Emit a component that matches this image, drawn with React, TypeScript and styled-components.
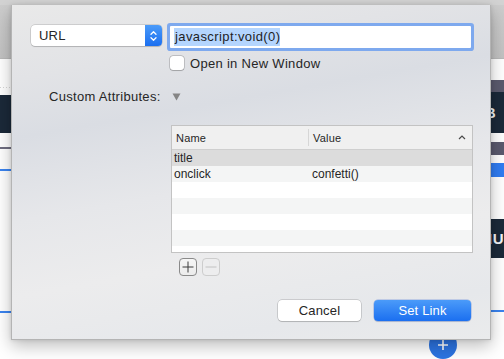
import React from "react";
import styled, { createGlobalStyle } from "styled-components";

const Global = createGlobalStyle`
  html, body { margin: 0; padding: 0; }
  body {
    width: 504px; height: 359px; overflow: hidden; background: #fff;
    font-family: "Liberation Sans", Arial, sans-serif;
    -webkit-font-smoothing: antialiased;
  }
`;

const Page = styled.div`
  position: relative;
  width: 504px;
  height: 359px;
  overflow: hidden;
  display: flex;
  flex-direction: column;
  background: #fff;
`;

const TitleStrip = styled.div`
  height: 5px;
  background: #d3d3d3;
  flex: none;
`;

const Toolbar = styled.div`
  height: 54px;
  flex: none;
  background: linear-gradient(180deg, #cdcdcd 0%, #c2c2c2 100%);
  border-bottom: 1px solid #b9b9b9;
  box-sizing: border-box;
`;

const Content = styled.div`
  flex: 1;
  display: flex;
  position: relative;
`;

const Gutter = styled.div<{ $w: number }>`
  width: ${(p) => p.$w}px;
  flex: none;
  display: flex;
  flex-direction: column;
`;

const Middle = styled.div`
  flex: 1;
  position: relative;
`;

const Band = styled.div<{ $h: number; $bg: string }>`
  height: ${(p) => p.$h}px;
  flex: none;
  background: ${(p) => p.$bg};
  display: flex;
  align-items: center;
  justify-content: flex-end;
`;

const BandText = styled.span<{ $right: number; $size: number }>`
  margin-right: ${(p) => p.$right}px;
  font-family: "Liberation Sans", Arial, sans-serif;
  font-weight: 700;
  font-size: ${(p) => p.$size}px;
  color: #f2f4f8;
  white-space: nowrap;
  letter-spacing: 0.5px;
`;

const Fab = styled.div`
  position: absolute;
  left: 418px;
  top: 272px;
  width: 28px;
  height: 28px;
  border-radius: 50%;
  background: #2c74e2;
  display: flex;
  align-items: center;
  justify-content: center;
`;

const Sheet = styled.div`
  position: absolute;
  left: 11px;
  top: 5px;
  width: 480px;
  height: 335px;
  box-sizing: border-box;
  border: 1px solid #b4b4b4;
  border-top: none;
  background: linear-gradient(170deg, #e9e9e9 0%, #e2e3e6 18%, #dadde3 32%, #e6e7ea 52%, #ececed 70%, #e6e8eb 88%, #eaebec 100%);
  box-shadow: 0 6px 16px rgba(0, 0, 0, 0.26), 0 0 4px rgba(0, 0, 0, 0.12);
  padding: 20px 19px 0 19px;
  display: flex;
  flex-direction: column;
  color: #262626;
  font-size: 13px;
`;

const Row = styled.div<{ $mt: number; $h: number; $pl?: number; $top?: boolean }>`
  display: flex;
  align-items: ${(p) => (p.$top ? "flex-start" : "center")};
  margin-top: ${(p) => p.$mt}px;
  height: ${(p) => p.$h}px;
  padding-left: ${(p) => p.$pl ?? 0}px;
  flex: none;
`;

const Popup = styled.div`
  width: 131px;
  height: 21px;
  box-sizing: border-box;
  display: flex;
  background: #fff;
  border-radius: 4px;
  box-shadow: 0 0 0 0.5px rgba(0, 0, 0, 0.22), 0 1px 1px rgba(0, 0, 0, 0.12);
  overflow: hidden;
`;

const PopupLabel = styled.div`
  flex: 1;
  padding-left: 8px;
  display: flex;
  align-items: center;
  font-size: 13px;
  letter-spacing: 0.2px;
  color: #262626;
`;

const Stepper = styled.div`
  width: 17px;
  background: linear-gradient(180deg, #4b9bf9 0%, #1b6ff0 100%);
  display: flex;
  align-items: center;
  justify-content: center;
`;

const Field = styled.div`
  margin-top: 1px;
  margin-left: 8px;
  width: 301px;
  height: 22px;
  box-sizing: border-box;
  background: #fff;
  box-shadow: 0 0 0 3px #7ea9ee;
  border-radius: 1px;
  display: flex;
  align-items: center;
  padding-left: 4px;
`;

const Selected = styled.span`
  background: #b4d5fe;
  height: 18px;
  line-height: 18px;
  font-size: 13px;
  letter-spacing: 0.4px;
  color: #1e1e1e;
  padding: 0 0 0 1px;
`;

const CheckBox = styled.div`
  width: 14px;
  height: 14px;
  box-sizing: border-box;
  background: #fff;
  border-radius: 3px;
  box-shadow: 0 0 0 0.5px rgba(0, 0, 0, 0.3), 0 0.5px 1px rgba(0, 0, 0, 0.15);
  margin-right: 6px;
`;

const Label = styled.span`
  font-size: 13px;
  letter-spacing: 0.3px;
  color: #262626;
  white-space: nowrap;
`;

const Disclosure = styled.svg`
  margin-left: 11px;
  margin-top: 2px;
`;

const Table = styled.div`
  margin-top: 21px;
  margin-left: 140px;
  width: 302px;
  height: 128px;
  box-sizing: border-box;
  border: 1px solid #c3c3c3;
  background: #fff;
  display: flex;
  flex-direction: column;
  flex: none;
`;

const Header = styled.div`
  height: 24px;
  box-sizing: border-box;
  background: #f0f0f0;
  border-bottom: 1px solid #cfcfcf;
  display: grid;
  grid-template-columns: 136px 1fr;
  font-size: 11px;
  letter-spacing: 0.2px;
  color: #262626;
  flex: none;
`;

const HeadCell = styled.div<{ $divider?: boolean }>`
  display: flex;
  align-items: center;
  justify-content: space-between;
  padding-left: 4px;
  padding-right: 6px;
  border-left: ${(p) => (p.$divider ? "1px solid #d6d6d6" : "none")};
  margin: ${(p) => (p.$divider ? "3px 0" : "0")};
`;

const Body = styled.div`
  flex: 1;
  overflow: hidden;
`;

const TRow = styled.div<{ $bg: string }>`
  height: 16px;
  background: ${(p) => p.$bg};
  display: grid;
  grid-template-columns: 136px 1fr;
  font-size: 12px;
  line-height: 16px;
  color: #262626;
`;

const Cell = styled.div<{ $pl: number }>`
  padding-left: ${(p) => p.$pl}px;
  white-space: nowrap;
`;

const SmallButton = styled.div<{ $enabled: boolean }>`
  width: 18px;
  height: 18px;
  box-sizing: border-box;
  border-radius: 4px;
  border: 1px solid ${(p) => (p.$enabled ? "#8a8a8a" : "#cdcdcd")};
  background: ${(p) => (p.$enabled ? "linear-gradient(180deg,#f6f6f6,#ececec)" : "#ededee")};
  display: flex;
  align-items: center;
  justify-content: center;
  margin-right: 5px;
`;

const ButtonRow = styled.div`
  margin-top: 24px;
  height: 21px;
  display: flex;
  justify-content: flex-end;
  gap: 13px;
  flex: none;
`;

const PushButton = styled.div<{ $primary?: boolean; $w: number }>`
  width: ${(p) => p.$w}px;
  height: 21px;
  box-sizing: border-box;
  border-radius: 4px;
  display: flex;
  align-items: center;
  justify-content: center;
  font-size: 13px;
  letter-spacing: 0.15px;
  color: ${(p) => (p.$primary ? "#fff" : "#262626")};
  background: ${(p) => (p.$primary ? "linear-gradient(180deg, #4b9bf9 0%, #1b6ff0 100%)" : "#fff")};
  box-shadow: ${(p) =>
    p.$primary
      ? "0 0 0 0.5px rgba(0,60,200,0.35), 0 1px 1px rgba(0,0,0,0.12)"
      : "0 0 0 0.5px rgba(0,0,0,0.25), 0 1px 1px rgba(0,0,0,0.12)"};
`;

const rows: { name: string; value: string; bg: string }[] = [
  { name: "title", value: "", bg: "#dcdcdc" },
  { name: "onclick", value: "confetti()", bg: "#f4f5f5" },
  { name: "", value: "", bg: "#ffffff" },
  { name: "", value: "", bg: "#f4f5f5" },
  { name: "", value: "", bg: "#ffffff" },
  { name: "", value: "", bg: "#f4f5f5" },
  { name: "", value: "", bg: "#ffffff" },
];

export default function App() {
  return (
    <>
      <Global />
      <Page>
        <TitleStrip />
        <Toolbar />
        <Content>
          <Gutter $w={11}>
            <Band $h={28} $bg="#ffffff" />
            <Band $h={1} $bg="repeating-linear-gradient(90deg,#d6d6d6 0 1px,#ffffff 1px 3px)" />
            <Band $h={7} $bg="#ffffff" />
            <Band $h={38} $bg="#1b2939" />
            <Band $h={14} $bg="#ffffff" />
            <Band $h={2} $bg="#6f6e80" />
            <Band $h={20} $bg="#ffffff" />
            <Band $h={2} $bg="#3a84f0" />
            <Band $h={140} $bg="#ffffff" />
            <Band $h={2} $bg="#3a84f0" />
          </Gutter>
          <Middle>
            <Fab>
              <svg width="12" height="12" viewBox="0 0 12 12">
                <path d="M6 1v10M1 6h10" stroke="#fff" strokeWidth="1.6" />
              </svg>
            </Fab>
          </Middle>
          <Gutter $w={13}>
            <Band $h={21} $bg="#ffffff" />
            <Band $h={12} $bg="#5b5a6e" />
            <Band $h={41} $bg="#1b2939">
              <BandText $right={8} $size={14}>B</BandText>
            </Band>
            <Band $h={9} $bg="#ffffff" />
            <Band $h={13} $bg="#5b5a6e" />
            <Band $h={8} $bg="#ffffff" />
            <Band $h={14} $bg="#2f7cf2" />
            <Band $h={42} $bg="#ffffff" />
            <Band $h={39} $bg="#1b2939">
              <BandText $right={0} $size={15}>NU</BandText>
            </Band>
            <Band $h={52} $bg="#ffffff" />
            <Band $h={2} $bg="#3a84f0" />
          </Gutter>
        </Content>

        <Sheet>
          <Row $mt={0} $h={23} $top>
            <Popup>
              <PopupLabel>URL</PopupLabel>
              <Stepper>
                <svg width="9" height="14" viewBox="0 0 9 14">
                  <path d="M2 5.2L4.5 2.7L7 5.2M2 8.8L4.5 11.3L7 8.8" fill="none" stroke="#fff" strokeWidth="1.3" strokeLinecap="round" strokeLinejoin="round" />
                </svg>
              </Stepper>
            </Popup>
            <Field>
              <Selected>javascript:void(0)</Selected>
            </Field>
          </Row>

          <Row $mt={8} $h={14} $pl={139}>
            <CheckBox />
            <Label>Open in New Window</Label>
          </Row>

          <Row $mt={18} $h={16} $pl={18}>
            <Label>Custom Attributes:</Label>
            <Disclosure width="9" height="8" viewBox="0 0 9 8">
              <path d="M0.5 0.5H8.5L4.5 7.5Z" fill="#858585" />
            </Disclosure>
          </Row>

          <Table>
            <Header>
              <HeadCell>Name</HeadCell>
              <HeadCell $divider>
                Value
                <svg width="8" height="5" viewBox="0 0 8 5">
                  <path d="M1 4L4 1L7 4" fill="none" stroke="#4a4a4a" strokeWidth="1.2" />
                </svg>
              </HeadCell>
            </Header>
            <Body>
              {rows.map((r, i) => (
                <TRow key={i} $bg={r.bg}>
                  <Cell $pl={2}>{r.name}</Cell>
                  <Cell $pl={4}>{r.value}</Cell>
                </TRow>
              ))}
            </Body>
          </Table>

          <Row $mt={5} $h={18} $pl={148}>
            <SmallButton $enabled>
              <svg width="12" height="12" viewBox="0 0 12 12">
                <path d="M6 0.5v11M0.5 6h11" stroke="#3c3c3c" strokeWidth="1" />
              </svg>
            </SmallButton>
            <SmallButton $enabled={false}>
              <svg width="12" height="12" viewBox="0 0 12 12">
                <path d="M0.5 6h11" stroke="#c2c2c2" strokeWidth="1" />
              </svg>
            </SmallButton>
          </Row>

          <ButtonRow>
            <PushButton $w={83}>Cancel</PushButton>
            <PushButton $w={97} $primary>Set Link</PushButton>
          </ButtonRow>
        </Sheet>
      </Page>
    </>
  );
}
